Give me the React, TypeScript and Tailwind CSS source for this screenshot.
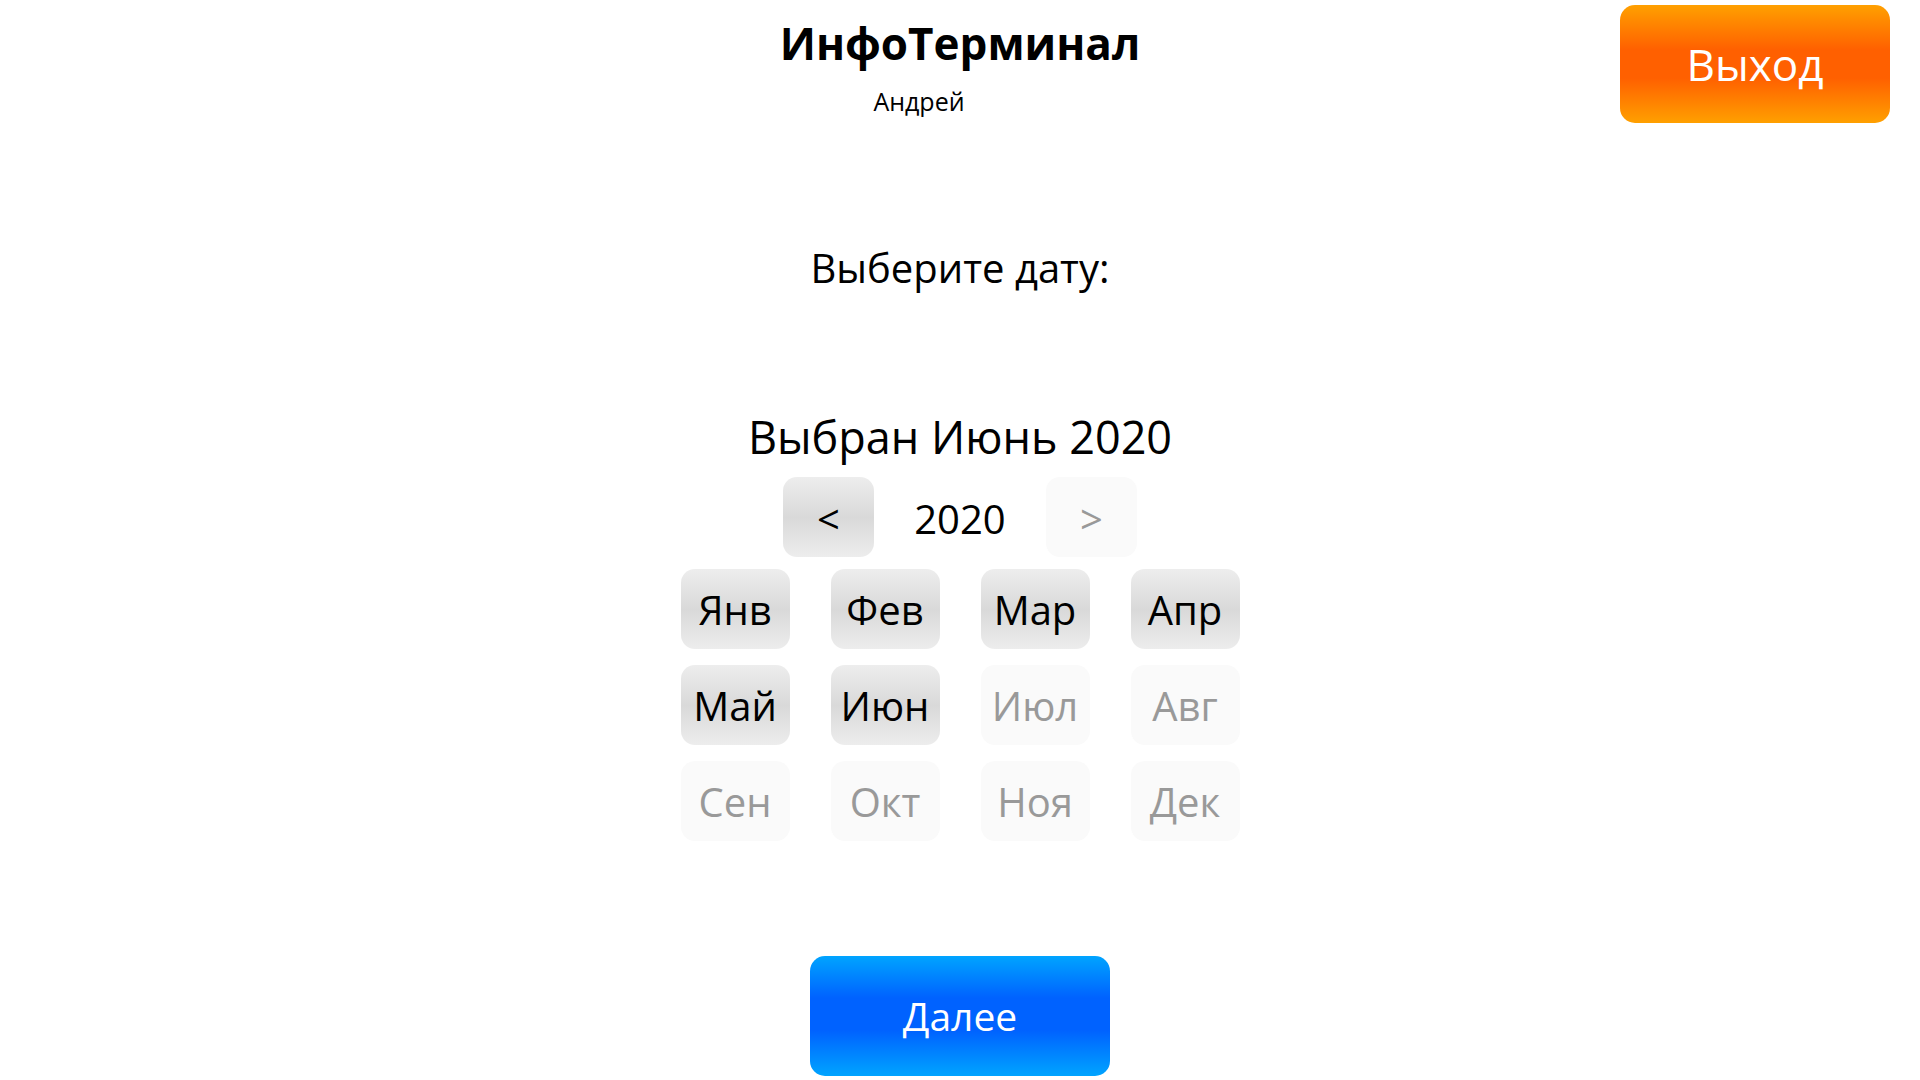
import React from 'react';

const months = ['Янв', 'Фев', 'Мар', 'Апр', 'Май', 'Июн', 'Июл', 'Авг', 'Сен', 'Окт', 'Ноя', 'Дек'];
const lastAvailable = 5; // июнь 2020 — дальше пока нельзя

const activeBtn =
  'bg-[linear-gradient(to_bottom,#ededed,#d9d9d9_50%,#ededed)] text-black';
const disabledBtn = 'bg-[#fafafa] text-[#999999]';

export default function App() {
  return (
    <div className="min-h-screen w-full bg-white font-['Open_Sans','Noto_Sans',sans-serif] text-black">
      {/* Шапка */}
      <header className="grid grid-cols-[1fr_auto_1fr] items-start">
        <div />
        <div className="flex flex-col items-center pt-[15px]">
          <h1 className="text-[44px] leading-[56px] font-bold">ИнфоТерминал</h1>
          <div className="mt-[15px] pr-[82px] text-[25px] leading-[30px]">Андрей</div>
        </div>
        <div className="flex justify-end pt-[5px] pr-[30px]">
          <button className="w-[270px] h-[118px] rounded-[15px] bg-[linear-gradient(to_bottom,#ffa000,#ff6000_38%,#ff6000_62%,#ffa000)] text-white text-[44px]">
            Выход
          </button>
        </div>
      </header>

      <main className="flex flex-col items-center">
        <p className="mt-[120px] text-[40px] leading-[50px]">Выберите дату:</p>

        <p className="mt-[116px] text-[45px] leading-[56px]">Выбран Июнь 2020</p>

        {/* Год */}
        <div className="mt-[12px] flex items-center">
          <button className={`w-[91px] h-[80px] pt-[4px] rounded-[14px] text-[40px] ${activeBtn}`}>&lt;</button>
          <div className="w-[172px] pt-[4px] text-center text-[40px]">2020</div>
          <button className={`w-[91px] h-[80px] pt-[4px] rounded-[14px] text-[40px] ${disabledBtn}`}>&gt;</button>
        </div>

        {/* Месяцы */}
        <div className="mt-[12px] grid grid-cols-4 gap-x-[41px] gap-y-[16px]">
          {months.map((m, i) => (
            <button
              key={m}
              className={`w-[109px] h-[80px] pt-[2px] rounded-[14px] text-[40px] ${i <= lastAvailable ? activeBtn : disabledBtn}`}
            >
              {m}
            </button>
          ))}
        </div>

        <button className="mt-[115px] w-[300px] h-[120px] rounded-[15px] bg-[linear-gradient(to_bottom,#00a4ff,#0062ff_35%,#0062ff_62%,#00a4ff)] text-white text-[39px]">
          Далее
        </button>
      </main>
    </div>
  );
}
